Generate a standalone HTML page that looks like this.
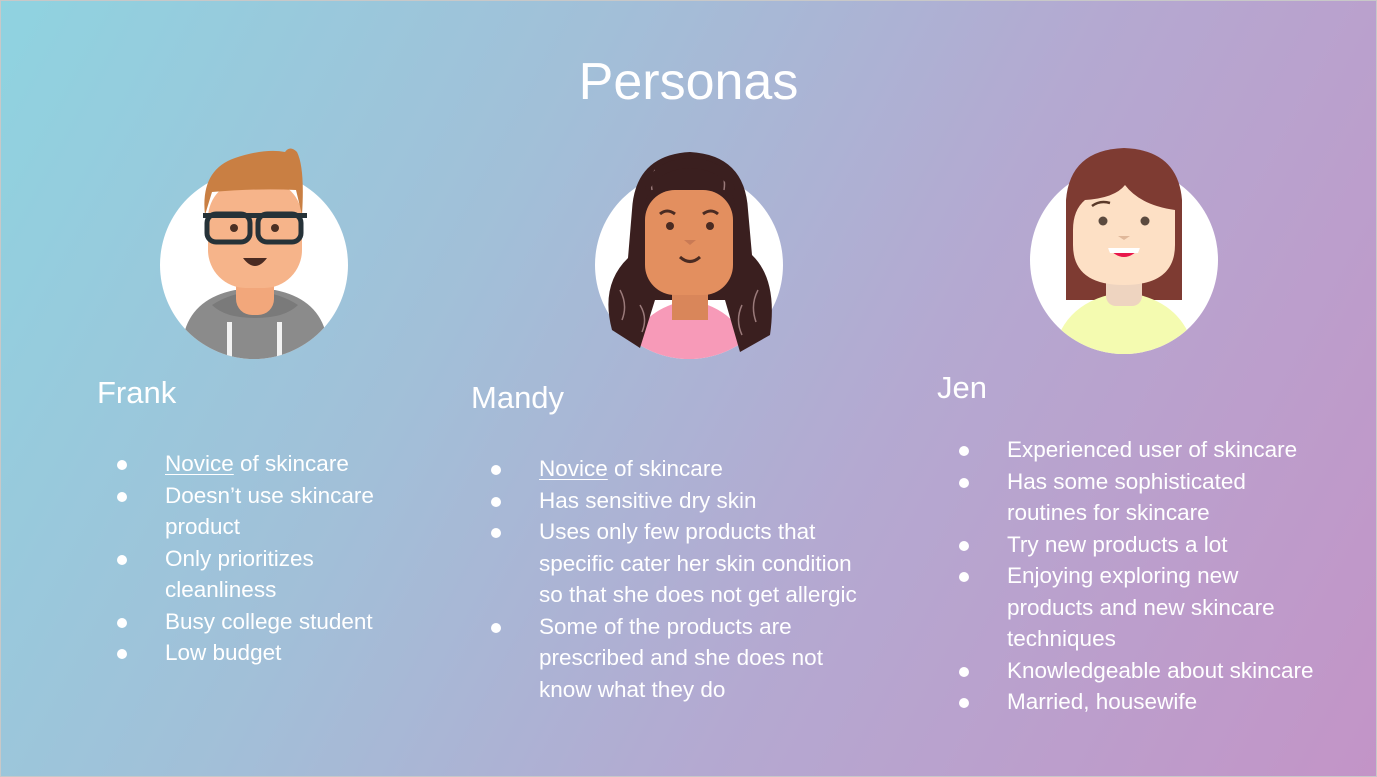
<!DOCTYPE html>
<html><head><meta charset="utf-8"><style>
html,body{margin:0;padding:0;}
body{width:1377px;height:777px;overflow:hidden;position:relative;font-family:"Liberation Sans",sans-serif;color:#fff;
background:linear-gradient(118deg,#8fd3e0 0%,#a2bfd8 35%,#b4a9d1 62%,#c394c7 100%);}
.frame{position:absolute;left:0;top:0;width:1375px;height:775px;border:1px solid #c8c8c8;}
.t{position:absolute;white-space:nowrap;}
h1{position:absolute;left:0;width:1377px;top:52px;margin:0;text-align:center;font-weight:normal;font-size:52px;}
.name{font-size:31px;}
ul{position:absolute;margin:0;padding:0;list-style:none;font-size:22.5px;line-height:31.5px;}
li{position:relative;padding-left:47px;}
li:before{content:"";position:absolute;left:-1px;top:12px;width:10px;height:10px;border-radius:50%;background:#fff;}
u{text-decoration-thickness:1px;text-underline-offset:3px;}
svg{position:absolute;left:0;top:0;}
</style></head><body>
<div class="frame"></div>
<svg width="1377" height="777" viewBox="0 0 1377 777">
<defs>
<clipPath id="c1"><circle cx="254" cy="265" r="94"/></clipPath>
<clipPath id="c2"><circle cx="689" cy="265" r="94"/></clipPath>
<clipPath id="c3"><circle cx="1124" cy="260" r="94"/></clipPath>
</defs>
<!-- Frank -->
<circle cx="254" cy="265" r="94" fill="#fff"/>
<g clip-path="url(#c1)">
<path d="M180 372 L185 330 Q195 298 235 290 L275 290 Q315 298 325 330 L330 372Z" fill="#8b8b8b"/>
<rect x="227" y="322" width="5" height="50" fill="#f2f2f2"/><rect x="277" y="322" width="5" height="50" fill="#f2f2f2"/>
</g>
<path d="M212 305 Q232 292 255 292 Q278 292 298 305 Q285 318 255 318 Q225 318 212 305Z" fill="#7a7a7a"/>
<rect x="236" y="270" width="38" height="45" rx="16" fill="#f2a77b"/>
<rect x="208" y="180" width="94" height="108" rx="38" fill="#f6b48a"/>
<path d="M205 215 Q200 170 235 158 Q265 148 285 152 Q290 145 297 152 Q305 168 302 215 L296 190 Q260 188 212 192Z" fill="#c97f43"/>
<rect x="207" y="214" width="43" height="28" rx="9" fill="none" stroke="#263238" stroke-width="5"/>
<rect x="258" y="214" width="43" height="28" rx="9" fill="none" stroke="#263238" stroke-width="5"/>
<rect x="203" y="213" width="104" height="5" fill="#263238"/>
<circle cx="234" cy="228" r="4" fill="#4a3024"/><circle cx="275" cy="228" r="4" fill="#4a3024"/>
<path d="M243 258 Q255 274 267 258Z" fill="#4a2b22"/>
<!-- Mandy -->
<circle cx="689" cy="265" r="94" fill="#fff"/>
<g clip-path="url(#c2)">
<path d="M625 372 Q630 310 689 300 Q748 310 753 372Z" fill="#f79ab8"/>
</g>
<path d="M632 210 Q635 155 690 152 Q745 155 748 210 L752 255 Q778 280 770 335 L740 352 L725 300 L655 300 L640 348 L612 330 Q600 285 628 258Z" fill="#3a1f1f"/>
<path d="M620 290 Q628 305 622 320 M758 290 Q750 305 756 322 M640 305 Q648 318 642 332 M742 305 Q735 320 742 335 M655 170 Q650 180 652 190 M720 168 Q726 178 724 190" stroke="#9a7a7a" stroke-width="1.5" fill="none"/>
<rect x="672" y="280" width="36" height="40" fill="#d9865a"/>
<rect x="645" y="190" width="88" height="105" rx="30" fill="#e38f5f"/>
<path d="M645 205 Q650 170 690 168 Q730 170 735 205 L735 190 Q730 160 690 158 Q650 160 645 190Z" fill="#3a1f1f"/>
<path d="M660 214 Q667 208 675 214 M703 214 Q711 208 718 214" stroke="#4a2b22" stroke-width="3" fill="none"/>
<circle cx="670" cy="226" r="4" fill="#4a2b22"/><circle cx="710" cy="226" r="4" fill="#4a2b22"/>
<path d="M684 240 L696 240 L690 245Z" fill="#c97a55"/>
<path d="M680 257 Q690 266 700 257" stroke="#4a2b22" stroke-width="3" fill="none"/>
<!-- Jen -->
<circle cx="1124" cy="260" r="94" fill="#fff"/>
<path d="M1066 300 L1066 200 Q1070 150 1124 148 Q1178 150 1182 200 L1182 300Z" fill="#7e3b32"/>
<g clip-path="url(#c3)">
<path d="M1052 360 Q1060 300 1124 292 Q1188 300 1196 360Z" fill="#f4fbb0"/>
</g>
<rect x="1106" y="270" width="36" height="36" rx="10" fill="#eed4c0"/>
<path d="M1073 230 Q1073 210 1085 200 Q1115 198 1125 185 Q1140 205 1175 210 L1175 245 Q1175 285 1124 285 Q1073 285 1073 245Z" fill="#fde0c5"/>
<path d="M1092 206 Q1100 200 1110 203" stroke="#5a3a2a" stroke-width="2.5" fill="none"/>
<circle cx="1103" cy="221" r="4.5" fill="#5b4a3f"/><circle cx="1145" cy="221" r="4.5" fill="#5b4a3f"/>
<path d="M1118 236 L1130 236 L1124 240Z" fill="#e0b89a"/>
<path d="M1108 248 Q1124 266 1140 248Z" fill="#e8164a"/>
<path d="M1108 248 L1140 248 L1138 253 L1110 253Z" fill="#fff"/>
</svg>
<h1>Personas</h1>
<div class="t name" style="left:97px;top:375px">Frank</div>
<div class="t name" style="left:471px;top:380px">Mandy</div>
<div class="t name" style="left:937px;top:370px">Jen</div>
<ul style="left:118px;top:448px;width:266px">
<li><u>Novice</u> of skincare</li>
<li>Doesn’t use skincare product</li>
<li>Only prioritizes cleanliness</li>
<li>Busy college student</li>
<li>Low budget</li>
</ul>
<ul style="left:492px;top:453px;width:380px">
<li><u>Novice</u> of skincare</li>
<li>Has sensitive dry skin</li>
<li>Uses only few products that specific cater her skin condition so that she does not get allergic</li>
<li>Some of the products are prescribed and she does not know what they do</li>
</ul>
<ul style="left:960px;top:434px;width:368px">
<li>Experienced user of skincare</li>
<li>Has some sophisticated routines for skincare</li>
<li>Try new products a lot</li>
<li>Enjoying exploring new products and new skincare techniques</li>
<li>Knowledgeable about skincare</li>
<li>Married, housewife</li>
</ul>
</body></html>
